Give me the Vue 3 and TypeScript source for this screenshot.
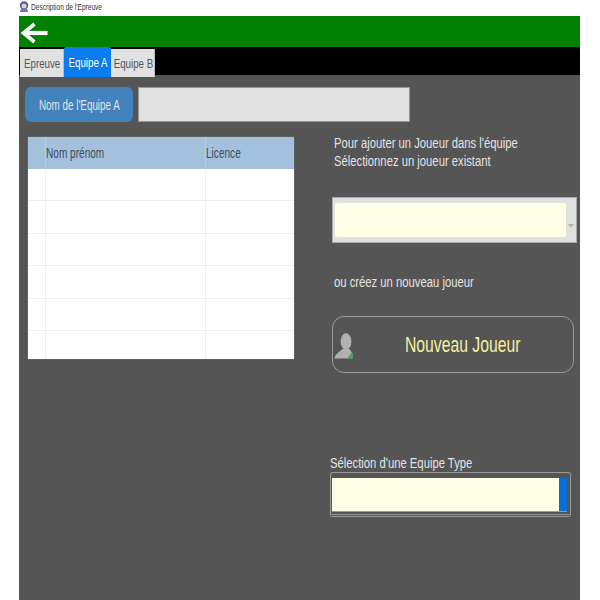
<script setup lang="ts">
const tabs: { label: string; active: boolean }[] = [
  { label: 'Epreuve', active: false },
  { label: 'Equipe A', active: true },
  { label: 'Equipe B', active: false },
]
const rows: number[] = [1, 2, 3, 4, 5, 6]
</script>

<template>
  <div class="page">
    <div class="titlebar">
      <svg class="appicon" width="10" height="11" viewBox="0 0 10 11">
        <circle cx="5" cy="4.5" r="4.2" fill="#4d5a9e" />
        <circle cx="5" cy="5" r="2.5" fill="#f2cdb6" />
        <path d="M1 11 C1 8 3 7.5 5 7.5 C7 7.5 9 8 9 11 Z" fill="#7278b4" />
      </svg>
      <span class="titletext">Description de l'Epreuve</span>
    </div>
    <div class="frame">
      <div class="greenbar">
        <svg class="arrow" width="28" height="22" viewBox="0 0 28 22">
          <path d="M14.5 2 L3.5 11 L14.5 20" fill="none" stroke="#fff" stroke-width="3.6" />
          <path d="M3 11 L27.5 11" fill="none" stroke="#fff" stroke-width="4.2" />
        </svg>
      </div>
      <div class="tabs">
        <div v-for="t in tabs" :key="t.label" class="tab" :class="{ active: t.active }">
          <span class="tabtext">{{ t.label }}</span>
        </div>
      </div>
      <div class="content">
        <div class="left">
          <div class="namerow">
            <div class="namebtn"><span class="nametext">Nom de l'Equipe A</span></div>
            <div class="nameinput"></div>
          </div>
          <div class="table">
            <div class="thead">
              <div class="c0"></div>
              <div class="c1"><span class="thtext">Nom prénom</span></div>
              <div class="c2"><span class="thtext">Licence</span></div>
            </div>
            <div v-for="r in rows" :key="r" class="trow">
              <div class="c0"></div>
              <div class="c1"></div>
              <div class="c2"></div>
            </div>
          </div>
        </div>
        <div class="right">
          <div class="help">
            <span class="txt">Pour ajouter un Joueur dans l'équipe</span>
            <span class="txt">Sélectionnez un joueur existant</span>
          </div>
          <div class="combo">
            <div class="comboinput"></div>
            <div class="comboarrow"></div>
          </div>
          <div class="or"><span class="txt">ou créez un nouveau joueur</span></div>
          <div class="newbtn">
            <svg class="usericon" width="19" height="26" viewBox="0 0 19 26">
              <ellipse cx="12" cy="8.5" rx="5.4" ry="8.2" fill="#b1b1b1" />
              <path d="M0.5 25.5 C1 21 5 19.5 8.5 16 L15.5 16 C16.5 18 18 19 18.5 21 L18.5 25.5 Z" fill="#b1b1b1" />
              <path d="M13 25.5 L18.5 19 L18.5 25.5 Z" fill="#4ba34f" />
            </svg>
            <div class="newlabelbox"><span class="newlabel">Nouveau Joueur</span></div>
          </div>
          <div class="typelabel"><span class="txt">Sélection d'une Equipe Type</span></div>
          <div class="typebox">
            <div class="typeinput"><div class="typeblue"></div></div>
          </div>
        </div>
      </div>
    </div>
  </div>
</template>

<style>
html, body { margin: 0; background: #fff; }
</style>

<style scoped>
.page {
  width: 600px;
  height: 600px;
  overflow: hidden;
  background: #fff;
  font-family: "Liberation Sans", Arial, sans-serif;
}
.titlebar {
  height: 16px;
  display: flex;
  align-items: center;
  padding-left: 19px;
  gap: 2px;
}
.appicon { margin-bottom: 3px; flex: none; }
.titletext {
  font-size: 9px;
  color: #333;
  white-space: nowrap;
  margin-bottom: 2px;
  transform: scaleX(0.73);
  transform-origin: left center;
}
.frame {
  width: 561px;
  margin-left: 19px;
  height: 584px;
  background: #555555;
  display: flex;
  flex-direction: column;
}
.greenbar {
  height: 31px;
  background: #008000;
  display: flex;
  align-items: center;
  padding-left: 1px;
  box-sizing: border-box;
}
.arrow { margin-top: 3px; }
.tabs {
  height: 28px;
  background: #000;
  display: flex;
  align-items: flex-start;
  padding-left: 1px;
  box-sizing: border-box;
}
.tab {
  width: 44px;
  height: 28px;
  margin-top: 2px;
  padding-left: 1px;
  background: #e1e1e1;
  color: #555;
  font-size: 13.5px;
  display: flex;
  align-items: center;
  justify-content: center;
  box-sizing: border-box;
  border-right: 1px solid #bbb;
}
.tab.active {
  width: 47px;
  height: 30px;
  margin-top: 0;
  background: #0a7cf0;
  color: #fff;
  border-right: 0;
  border-radius: 2px 2px 0 0;
}
.tabtext {
  white-space: nowrap;
  transform: scaleX(0.72);
}
.content {
  flex: 1;
  display: flex;
  align-items: flex-start;
}
.left {
  width: 311px;
  padding-top: 12px;
  flex: none;
}
.namerow {
  display: flex;
  gap: 5px;
  padding-left: 6px;
}
.namebtn {
  width: 108px;
  height: 35px;
  background: #4282bd;
  border-radius: 6px;
  color: #e4e4e4;
  font-size: 14px;
  display: flex;
  align-items: center;
  justify-content: center;
  flex: none;
}
.nametext {
  white-space: nowrap;
  transform: scaleX(0.705);
}
.nameinput {
  width: 272px;
  height: 35px;
  background: #e1e1e1;
  border: 1px solid #999;
  box-sizing: border-box;
  flex: none;
}
.table {
  margin: 15px 0 0 9px;
  width: 266px;
  background: #fff;
  box-shadow: 0 0 1px #999;
}
.thead, .trow {
  display: grid;
  grid-template-columns: 17px 160px 89px;
}
.thead {
  height: 32px;
  background: #a3c1dd;
  color: #3e4a57;
  font-size: 14px;
  line-height: 32px;
}
.thtext {
  display: inline-block;
  white-space: nowrap;
  transform: scaleX(0.72);
  transform-origin: left center;
}
.trow {
  height: 32.4px;
  box-sizing: border-box;
  border-bottom: 1px solid #efefef;
}
.trow:last-child { height: 28px; border-bottom: 0; }
.thead .c1, .thead .c2 { border-left: 1px solid #b4cee4; box-sizing: border-box; }
.trow .c1, .trow .c2 { border-left: 1px solid #efefef; box-sizing: border-box; }
.right {
  width: 250px;
  padding-top: 60px;
  color: #e4e4e4;
  font-size: 14px;
}
.txt {
  display: block;
  white-space: nowrap;
  transform: scaleX(0.805);
  transform-origin: left center;
}
.help {
  margin-left: 4px;
  line-height: 17.5px;
}
.combo {
  margin: 27px 0 0 2px;
  width: 245px;
  height: 46px;
  box-sizing: border-box;
  background: #e1e1e1;
  border: 1px solid #aaa;
  padding: 5px 2px;
  display: flex;
}
.comboinput {
  width: 231px;
  height: 34px;
  background: #ffffe6;
}
.comboarrow {
  margin: 21px 0 0 2px;
  width: 0;
  height: 0;
  border-left: 3px solid transparent;
  border-right: 3px solid transparent;
  border-top: 4px solid #b5b5b5;
}
.or {
  margin: 31px 0 0 4px;
  line-height: 16px;
}
.newbtn {
  margin: 26px 0 0 2px;
  width: 242px;
  height: 57px;
  box-sizing: border-box;
  border: 1px solid #9b9b9b;
  border-radius: 12px;
  display: flex;
  align-items: center;
}
.usericon { margin-left: 1px; margin-top: 3px; flex: none; }
.newlabelbox {
  flex: 1;
  display: flex;
  justify-content: center;
}
.newlabel {
  color: #f3f0a0;
  font-size: 22px;
  white-space: nowrap;
  transform: scaleX(0.715);
}
.typelabel {
  margin-top: 82px;
  line-height: 16px;
}
.typebox {
  margin-top: 1px;
  width: 241px;
  height: 45px;
  box-sizing: border-box;
  border: 1px solid #9b9b9b;
  border-bottom: 3px double #9b9b9b;
  border-radius: 3px;
  padding: 5px 1px 0;
}
.typeinput {
  width: 235px;
  height: 33px;
  background: #ffffe6;
  display: flex;
  justify-content: flex-end;
  box-shadow: 0 1px 0 #999;
}
.typeblue {
  width: 8px;
  background: #0a6fd6;
}
</style>
